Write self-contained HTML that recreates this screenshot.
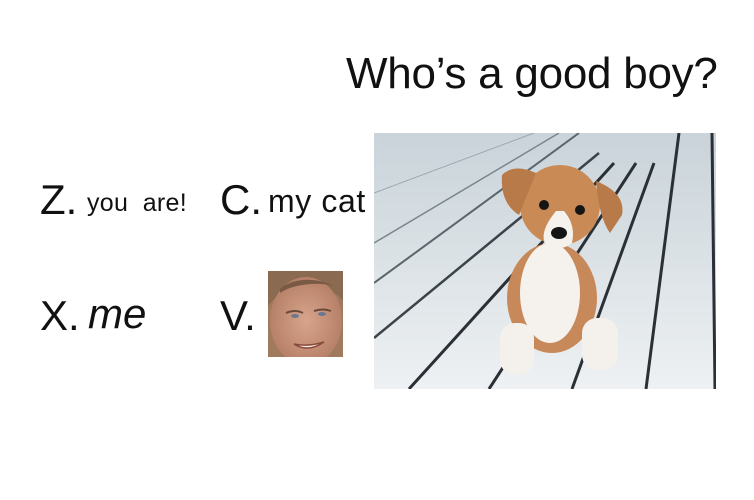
<!DOCTYPE html>
<html><head><meta charset="utf-8"><style>
body{margin:0;width:754px;height:500px;background:#fff;position:relative;overflow:hidden;font-family:"Liberation Sans",sans-serif;color:#111}
.t{position:absolute;white-space:nowrap;line-height:1}
</style></head><body>
<div class="t" style="left:346px;top:52px;font-size:44px;letter-spacing:-0.25px">Who’s a good boy?</div>
<div class="t" style="left:40px;top:179px;font-size:42px">Z.</div>
<div class="t" style="left:87px;top:191px;font-size:25px;letter-spacing:0.3px">you&nbsp;&nbsp;are!</div>
<div class="t" style="left:220px;top:179px;font-size:42px">C.</div>
<div class="t" style="left:268px;top:185px;font-size:32px;letter-spacing:0.6px">my cat</div>
<div class="t" style="left:40px;top:295px;font-size:42px">X.</div>
<div class="t" style="left:88px;top:293px;font-size:42px;font-style:italic">me</div>
<div class="t" style="left:220px;top:295px;font-size:42px">V.</div>

<svg style="position:absolute;left:268px;top:271px" width="75" height="86" viewBox="0 0 75 86">
<defs><radialGradient id="sk" cx="50%" cy="50%" r="60%"><stop offset="0" stop-color="#d9a48c"/><stop offset="1" stop-color="#b07a62"/></radialGradient></defs>
<rect width="75" height="86" fill="#a07a5c"/>
<path d="M0 0H75V30C60 10 20 8 0 35Z" fill="#8a6a50"/>
<ellipse cx="38" cy="50" rx="36" ry="44" fill="url(#sk)"/>
<path d="M12 18C25 6 50 6 68 16C60 12 30 10 12 22Z" fill="#7a5a44"/>
<path d="M18 42Q27 38 35 42M46 40Q55 37 63 40" stroke="#6a4a3a" stroke-width="2" fill="none"/>
<ellipse cx="27" cy="45" rx="4" ry="2" fill="#6a7890"/>
<ellipse cx="54" cy="43" rx="4" ry="2" fill="#6a7890"/>
<path d="M26 73Q40 82 56 71Q40 76 26 73Z" fill="#f4eee8" stroke="#8a4a3a" stroke-width="1.5"/>
</svg>

<svg style="position:absolute;left:374px;top:133px" width="342" height="256" viewBox="0 0 342 256">
<defs><linearGradient id="bg" x1="0" y1="0" x2="0" y2="1"><stop offset="0" stop-color="#c9d3d9"/><stop offset="1" stop-color="#eef1f3"/></linearGradient></defs>
<rect width="342" height="256" fill="url(#bg)"/>
<g stroke="#2a3036" fill="none">
<path d="M0 60L160 0" stroke-width="1" stroke="#9aa6ae"/>
<path d="M0 110L185 0" stroke-width="1.5" stroke="#7a868e"/>
<path d="M0 150L205 0" stroke-width="2" stroke="#5a656c"/>
<path d="M0 205L225 20" stroke-width="2.5" stroke="#3a444a"/>
<path d="M35 256L240 30" stroke-width="3"/>
<path d="M115 256L262 30" stroke-width="3"/>
<path d="M198 256L280 30" stroke-width="3"/>
<path d="M272 256L305 0" stroke-width="3"/>
<path d="M338 0L341 256" stroke-width="3"/>
</g>
<g>
<ellipse cx="178" cy="165" rx="45" ry="55" fill="#c8895a"/>
<ellipse cx="176" cy="160" rx="30" ry="50" fill="#f5f1ed"/>
<rect x="126" y="190" width="34" height="52" rx="15" fill="#f4f0ec"/>
<rect x="208" y="185" width="36" height="52" rx="15" fill="#f4f0ec"/>
<ellipse cx="186" cy="72" rx="40" ry="40" fill="#c98a56"/>
<path d="M128 42Q140 30 162 40L145 82Q126 70 128 42Z" fill="#b87a48"/>
<path d="M222 48Q252 60 248 82L236 100Q225 85 222 48Z" fill="#b87a48"/>
<path d="M182 78Q164 100 172 112Q185 120 198 110Q202 92 190 78Z" fill="#f5f1ed"/>
<circle cx="170" cy="72" r="5" fill="#151515"/>
<circle cx="206" cy="77" r="5" fill="#151515"/>
<ellipse cx="185" cy="100" rx="8" ry="6" fill="#151515"/>
</g>
</svg>
</body></html>
